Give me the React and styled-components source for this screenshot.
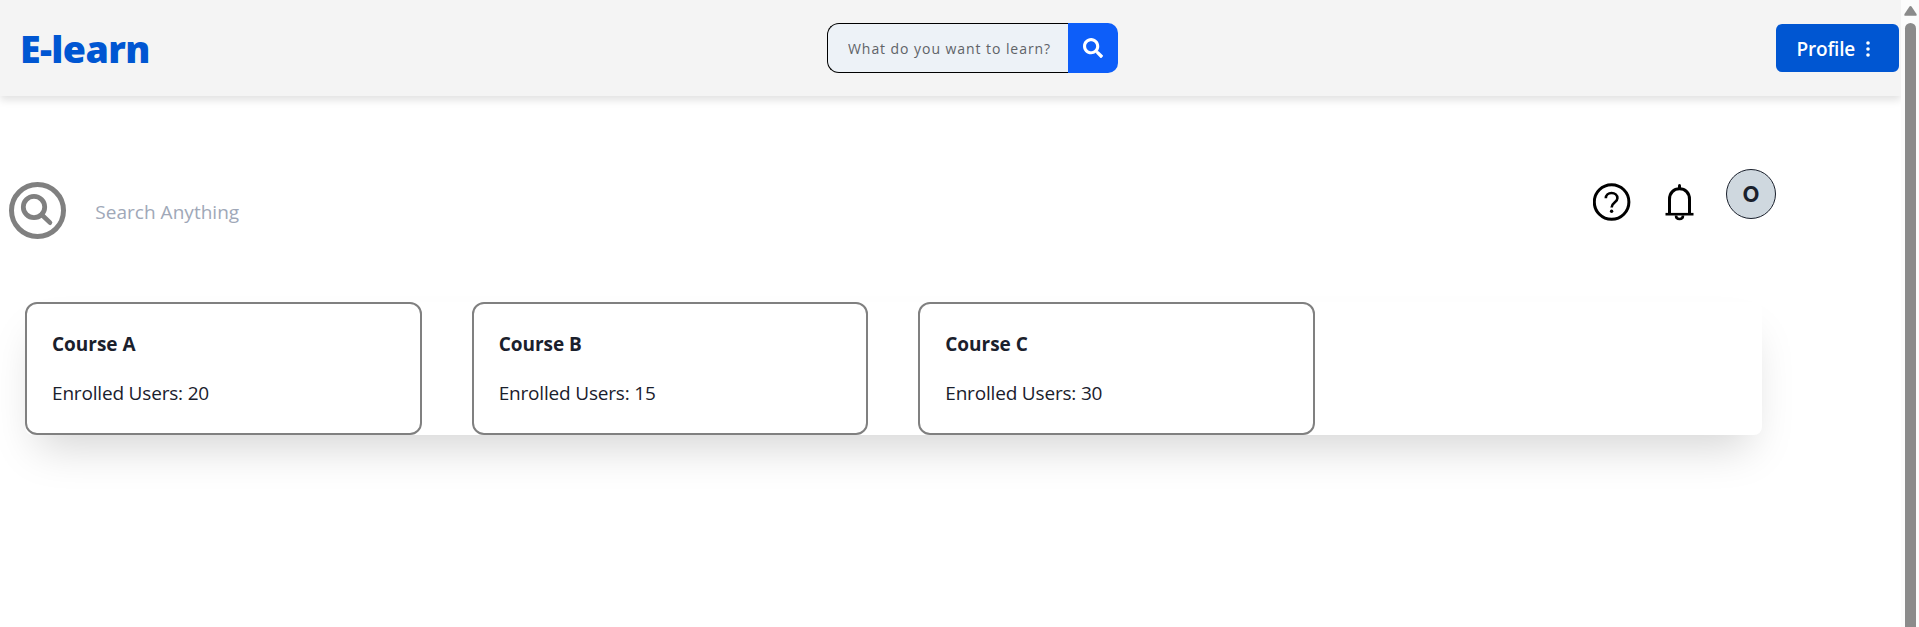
import React from "react";
import styled, { createGlobalStyle } from "styled-components";
import { FaSearch } from "react-icons/fa";

const GlobalStyle = createGlobalStyle`
  *, *::before, *::after { box-sizing: border-box; }
  body {
    margin: 0;
    overflow: hidden;
    background: #fff;
    color: #1a202c;
    font-family: "Open Sans", "Noto Sans", sans-serif;
  }
  button, input { font-family: inherit; }
  h1, h2, p { margin: 0; }
`;

const Window = styled.div`
  display: flex;
  height: 627px;
`;

const Page = styled.div`
  flex: 1;
  min-width: 0;
  overflow: hidden;
`;

const Navbar = styled.header`
  display: grid;
  grid-template-columns: 1fr auto 1fr;
  align-items: center;
  height: 96px;
  padding: 0 2px 0 20px;
  background: #f4f4f4;
  box-shadow: 0 4px 8px rgba(0, 0, 0, 0.12);
`;

const Logo = styled.h1`
  padding-top: 2px;
  font-size: 37.5px;
  font-weight: 800;
  line-height: 50px;
  letter-spacing: -0.6px;
  color: #0056d2;
`;

const NavSearch = styled.form`
  display: flex;
  height: 50px;
  margin-left: 26px;
`;

const NavInput = styled.input`
  width: 241px;
  padding: 1px 0 0 20px;
  border: 1px solid #000;
  border-right: 0;
  border-radius: 12px 0 0 12px;
  background: #edf2f7;
  font-size: 14px;
  letter-spacing: 0.94px;
  outline: none;
  &::placeholder { color: #5f6368; opacity: 1; }
`;

const NavSearchButton = styled.button`
  display: grid;
  place-items: center;
  width: 50px;
  padding: 0;
  border: 0;
  border-radius: 0 10px 10px 0;
  background: #0d5ef9;
  color: #fff;
`;

const ProfileButton = styled.button`
  justify-self: end;
  display: flex;
  align-items: center;
  gap: 11px;
  width: 123px;
  height: 48px;
  padding: 1px 0 0 20.5px;
  border: 0;
  border-radius: 6px;
  background: #0056d2;
  color: #fff;
  font-size: 19px;
  font-weight: 600;
  letter-spacing: -0.2px;
`;

const Toolbar = styled.section`
  display: flex;
  justify-content: space-between;
  align-items: flex-start;
  width: 1776px;
  margin-top: 73px;
  padding-left: 9.3px;
`;

const SearchGroup = styled.label`
  display: flex;
  align-items: center;
  gap: 29px;
  padding-top: 13px;
`;

const PlainInput = styled.input`
  width: 300px;
  margin-top: 3px;
  padding: 0;
  border: 0;
  background: transparent;
  font-size: 19px;
  letter-spacing: 0.03px;
  outline: none;
  &::placeholder { color: #a0a8b8; opacity: 1; }
`;

const Actions = styled.div`
  display: flex;
  align-items: flex-start;
`;

const HelpIcon = styled.svg`
  margin: 14px 34px 0 0;
`;

const BellIcon = styled.svg`
  margin: 14px 32px 0 0;
`;

const Avatar = styled.div`
  display: grid;
  place-items: center;
  width: 50px;
  height: 50px;
  border: 1px solid #1a202c;
  border-radius: 50%;
  background: #cfd8df;
  font-family: Inter, sans-serif;
  font-size: 22px;
  font-weight: 700;
`;

const CourseGrid = styled.section`
  display: grid;
  grid-template-columns: repeat(4, 1fr);
  gap: 50px;
  width: 1736.5px;
  height: 133px;
  margin: 63px 0 0 25px;
  border-radius: 8px;
  background: #fff;
  box-shadow: 0 24px 44px -12px rgba(0, 0, 0, 0.17);
`;

const CourseCard = styled.article`
  padding: 25px;
  border: 2px solid #808080;
  border-radius: 12px;
`;

const CourseTitle = styled.h2`
  margin-bottom: 19px;
  font-size: 19px;
  font-weight: 700;
  line-height: 30px;
  letter-spacing: -0.02px;
`;

const CourseInfo = styled.p`
  font-size: 19px;
  line-height: 30px;
  letter-spacing: -0.18px;
  white-space: nowrap;
`;

const ScrollTrack = styled.div`
  display: flex;
  flex-direction: column;
  align-items: center;
  gap: 7px;
  width: 18px;
  padding: 6px 1px 0 2px;
  background: #fcfcfc;
`;

const ScrollThumb = styled.div`
  width: 11px;
  flex: 1;
  border-radius: 6px 6px 0 0;
  background: #8b8b8b;
`;

const courses = [
  { name: "Course A", users: 20 },
  { name: "Course B", users: 15 },
  { name: "Course C", users: 30 },
];

export default function App() {
  return (
    <>
      <GlobalStyle />
      <Window>
        <Page>
          <Navbar>
            <Logo>E-learn</Logo>
            <NavSearch>
              <NavInput placeholder="What do you want to learn?" />
              <NavSearchButton type="button" aria-label="Search">
                <FaSearch size={20} />
              </NavSearchButton>
            </NavSearch>
            <ProfileButton>
              Profile
              <svg width="4" height="16" viewBox="0 0 4 16" fill="currentColor">
                <circle cx="2" cy="2" r="1.8" />
                <circle cx="2" cy="8" r="1.8" />
                <circle cx="2" cy="14" r="1.8" />
              </svg>
            </ProfileButton>
          </Navbar>
          <Toolbar>
            <SearchGroup>
              <svg width="57" height="57" viewBox="0 0 57 57" fill="none" stroke="#808080">
                <circle cx="28.5" cy="28.5" r="26" strokeWidth="5" />
                <circle cx="25" cy="25" r="10.7" strokeWidth="4.8" />
                <path d="M32.5 32.5 41 40.7" strokeWidth="4.6" strokeLinecap="round" />
              </svg>
              <PlainInput placeholder="Search Anything" />
            </SearchGroup>
            <Actions>
              <HelpIcon width="38" height="38" viewBox="0 0 38 38" fill="none" stroke="#000">
                <circle cx="18.6" cy="19" r="17.3" strokeWidth="3" />
                <path d="M12.8 15.3c0-3.2 2.5-5.3 5.8-5.3s5.8 2.1 5.8 5.2c0 4.4-5.8 4.4-5.8 9.2" strokeWidth="2.6" />
                <circle cx="18.6" cy="28.3" r="1.7" fill="#000" stroke="none" />
              </HelpIcon>
              <BellIcon width="29" height="38" viewBox="0 0 29 38" fill="none" stroke="#000" strokeWidth="3">
                <path d="M0.5 31.2H28.5" strokeWidth="2.6" />
                <path d="M4.5 31.5V16.2C4.5 9.8 8.8 5.8 14.5 5.8S24.5 9.8 24.5 16.2V31.5" />
                <path d="M14.5 5V2.5" strokeLinecap="round" />
                <path d="M11 32.5c0 2.2 1.4 3.5 3.5 3.5S18 34.7 18 32.5" strokeWidth="2.6" />
              </BellIcon>
              <Avatar>O</Avatar>
            </Actions>
          </Toolbar>
          <CourseGrid>
            {courses.map(({ name, users }) => (
              <CourseCard key={name}>
                <CourseTitle>{name}</CourseTitle>
                <CourseInfo>Enrolled Users: {users}</CourseInfo>
              </CourseCard>
            ))}
          </CourseGrid>
        </Page>
        <ScrollTrack>
          <svg width="13" height="10" viewBox="0 0 13 10" fill="#8b8b8b">
            <path d="M5.3 0.8Q6.5-0.6 7.7 0.8L12.5 8Q13.2 9.8 11.5 9.8H1.5Q-0.2 9.8 0.5 8Z" />
          </svg>
          <ScrollThumb />
        </ScrollTrack>
      </Window>
    </>
  );
}
